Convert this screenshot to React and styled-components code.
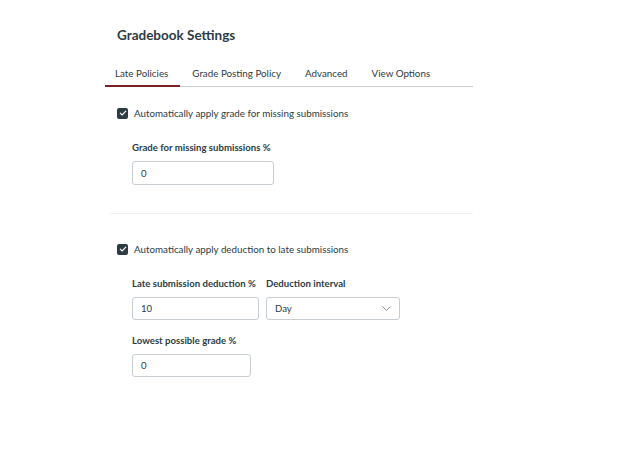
import React from "react";
import styled, { createGlobalStyle } from "styled-components";

const GlobalStyle = createGlobalStyle`
    body {
        margin: 0;
        background: #ffffff;
        font-family: Lato, "Noto Sans", sans-serif;
        color: #2d3b45;
    }
`;

const Page = styled.div`
    width: 368px;
    padding: 24px 0 40px 105px;
`;

const Title = styled.h1`
    margin: 0 0 0 12px;
    font-size: 13.5px;
    font-weight: 700;
    line-height: 22px;
`;

const TabList = styled.div`
    display: flex;
    margin-top: 15px;
    border-bottom: 1px solid #c7cdd1;
`;

const Tab = styled.div`
    padding: 6px 12px 5px 10px;
    margin-right: 2px;
    font-size: 9.8px;
    line-height: 13px;
    margin-bottom: -1px;
    border-bottom: 2px solid ${({ $active }) => ($active ? "#7b2020" : "transparent")};
`;

const Section = styled.div`
    padding: ${({ $top }) => $top}px 0 0 12px;
`;

const CheckRow = styled.label`
    display: flex;
    align-items: center;
    gap: 6px;
    font-size: 9.8px;
    line-height: 12px;
`;

const Box = styled.span`
    width: 11px;
    height: 11px;
    border-radius: 2px;
    background: #2d3b45;
    display: flex;
    align-items: center;
    justify-content: center;
`;

const Fields = styled.div`
    padding: ${({ $top }) => $top}px 0 0 15px;
    display: flex;
    flex-direction: column;
    gap: 15px;
`;

const FieldRow = styled.div`
    display: flex;
    gap: 7px;
`;

const Field = styled.div`
    display: flex;
    flex-direction: column;
    gap: 7px;
`;

const Label = styled.div`
    font-size: 9.6px;
    font-weight: 700;
    line-height: 12px;
    white-space: nowrap;
`;

const Input = styled.div`
    box-sizing: border-box;
    width: ${({ $w }) => $w}px;
    height: ${({ $h }) => $h || 23}px;
    border: 1px solid #c7cdd1;
    border-radius: 3px;
    padding: 0 8px;
    display: flex;
    align-items: center;
    justify-content: space-between;
    font-size: 9.6px;
`;

const Divider = styled.hr`
    margin: 28px 0 0 5px;
    border: none;
    border-top: 1px solid #f0f1f2;
`;

const Check = () => (
    <Box>
        <svg width="8" height="8" viewBox="0 0 8 8" fill="none">
            <path d="M1.3 4.2 L3.1 6 L6.8 2.1" stroke="#fff" strokeWidth="1.1" strokeLinecap="round" strokeLinejoin="round" />
        </svg>
    </Box>
);

const App = () => {
    return (
        <>
            <GlobalStyle />
            <Page>
                <Title>Gradebook Settings</Title>
                <TabList>
                    <Tab $active>Late Policies</Tab>
                    <Tab>Grade Posting Policy</Tab>
                    <Tab>Advanced</Tab>
                    <Tab>View Options</Tab>
                </TabList>
                <Section $top={20}>
                    <CheckRow>
                        <Check />
                        Automatically apply grade for missing submissions
                    </CheckRow>
                    <Fields $top={23}>
                        <Field>
                            <Label>Grade for missing submissions %</Label>
                            <Input $w={142} $h={24}>0</Input>
                        </Field>
                    </Fields>
                </Section>
                <Divider />
                <Section $top={29}>
                    <CheckRow>
                        <Check />
                        Automatically apply deduction to late submissions
                    </CheckRow>
                    <Fields $top={23}>
                        <FieldRow>
                            <Field>
                                <Label>Late submission deduction %</Label>
                                <Input $w={127}>10</Input>
                            </Field>
                            <Field>
                                <Label>Deduction interval</Label>
                                <Input $w={134}>
                                    Day
                                    <svg width="9" height="5" viewBox="0 0 9 5" fill="none">
                                        <path d="M0.5 0.5 L4.5 4.5 L8.5 0.5" stroke="#6b7780" strokeWidth="0.8" />
                                    </svg>
                                </Input>
                            </Field>
                        </FieldRow>
                        <Field>
                            <Label>Lowest possible grade %</Label>
                            <Input $w={119}>0</Input>
                        </Field>
                    </Fields>
                </Section>
            </Page>
        </>
    );
};

export default App;
